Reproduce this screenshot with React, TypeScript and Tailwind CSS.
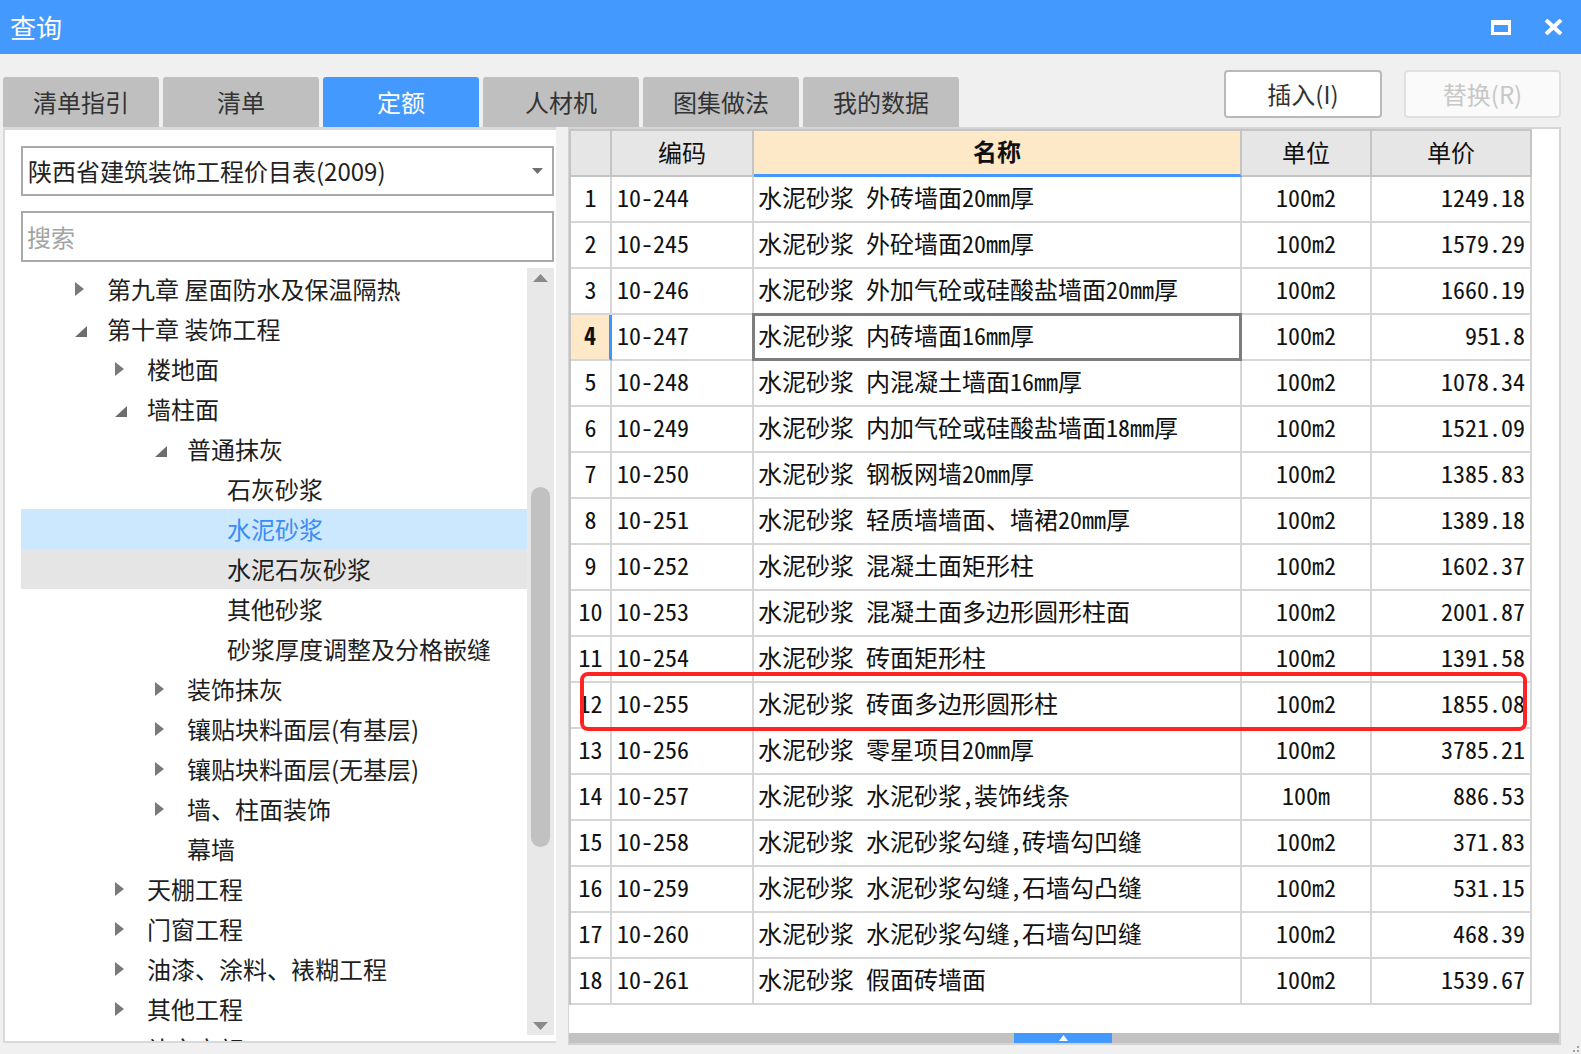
import React from 'react';

type TreeNode = {
  label: string;
  level: 1 | 2 | 3 | 4;
  state?: 'open' | 'closed';
  selected?: boolean;
  hover?: boolean;
};

const tabs = ['清单指引', '清单', '定额', '人材机', '图集做法', '我的数据'];

const tree: TreeNode[] = [
  { label: '第九章 屋面防水及保温隔热', level: 1, state: 'closed' },
  { label: '第十章 装饰工程', level: 1, state: 'open' },
  { label: '楼地面', level: 2, state: 'closed' },
  { label: '墙柱面', level: 2, state: 'open' },
  { label: '普通抹灰', level: 3, state: 'open' },
  { label: '石灰砂浆', level: 4 },
  { label: '水泥砂浆', level: 4, selected: true },
  { label: '水泥石灰砂浆', level: 4, hover: true },
  { label: '其他砂浆', level: 4 },
  { label: '砂浆厚度调整及分格嵌缝', level: 4 },
  { label: '装饰抹灰', level: 3, state: 'closed' },
  { label: '镶贴块料面层(有基层)', level: 3, state: 'closed' },
  { label: '镶贴块料面层(无基层)', level: 3, state: 'closed' },
  { label: '墙、柱面装饰', level: 3, state: 'closed' },
  { label: '幕墙', level: 3 },
  { label: '天棚工程', level: 2, state: 'closed' },
  { label: '门窗工程', level: 2, state: 'closed' },
  { label: '油漆、涂料、裱糊工程', level: 2, state: 'closed' },
  { label: '其他工程', level: 2, state: 'closed' },
  { label: '补充定额', level: 2, state: 'closed' },
];

const indent: Record<number, string> = {
  1: 'pl-[54px]',
  2: 'pl-[94px]',
  3: 'pl-[134px]',
  4: 'pl-[174px]',
};

const rows: [string, string, string, string][] = [
  ['10-244', '水泥砂浆 外砖墙面20mm厚', '100m2', '1249.18'],
  ['10-245', '水泥砂浆 外砼墙面20mm厚', '100m2', '1579.29'],
  ['10-246', '水泥砂浆 外加气砼或硅酸盐墙面20mm厚', '100m2', '1660.19'],
  ['10-247', '水泥砂浆 内砖墙面16mm厚', '100m2', '951.8'],
  ['10-248', '水泥砂浆 内混凝土墙面16mm厚', '100m2', '1078.34'],
  ['10-249', '水泥砂浆 内加气砼或硅酸盐墙面18mm厚', '100m2', '1521.09'],
  ['10-250', '水泥砂浆 钢板网墙20mm厚', '100m2', '1385.83'],
  ['10-251', '水泥砂浆 轻质墙墙面、墙裙20mm厚', '100m2', '1389.18'],
  ['10-252', '水泥砂浆 混凝土面矩形柱', '100m2', '1602.37'],
  ['10-253', '水泥砂浆 混凝土面多边形圆形柱面', '100m2', '2001.87'],
  ['10-254', '水泥砂浆 砖面矩形柱', '100m2', '1391.58'],
  ['10-255', '水泥砂浆 砖面多边形圆形柱', '100m2', '1855.08'],
  ['10-256', '水泥砂浆 零星项目20mm厚', '100m2', '3785.21'],
  ['10-257', '水泥砂浆 水泥砂浆,装饰线条', '100m', '886.53'],
  ['10-258', '水泥砂浆 水泥砂浆勾缝,砖墙勾凹缝', '100m2', '371.83'],
  ['10-259', '水泥砂浆 水泥砂浆勾缝,石墙勾凸缝', '100m2', '531.15'],
  ['10-260', '水泥砂浆 水泥砂浆勾缝,石墙勾凹缝', '100m2', '468.39'],
  ['10-261', '水泥砂浆 假面砖墙面', '100m2', '1539.67'],
];

const Closed = () => (
  <svg width="9" height="14" viewBox="0 0 9 14">
    <path d="M0 0 L9 7 L0 14 Z" fill="#7a7a7a" />
  </svg>
);

const Open = () => (
  <svg width="12" height="11" viewBox="0 0 12 11" className="mt-[4px]">
    <path d="M12 0 L12 11 L0 11 Z" fill="#6e6e6e" />
  </svg>
);

const cell = 'h-[46px] pb-[5px] border-r-2 border-b-2 border-[#d6d6d6] flex items-center';
const head = 'h-[46px] pb-[3px] border-r-2 border-b-2 border-[#c4c4c4] bg-[#e6e6e6] flex items-center justify-center';

export default function App() {
  return (
    <div className="relative w-[1581px] h-[1054px] overflow-hidden bg-[#f0f0f0] flex flex-col font-['Noto_Sans_CJK_SC','Noto_Sans',sans-serif] text-[#1e1e1e]">
      {/* title bar */}
      <div className="h-[54px] bg-[#4499ff] flex items-center pl-[10px] pr-[18px]">
        <span className="text-[26px] leading-none text-white">查询</span>
        <div className="ml-auto w-[20px] h-[15px] border-[3px] border-t-[5px] border-white" />
        <svg width="19" height="16" viewBox="0 0 19 16" className="ml-[33px]">
          <path d="M2 1 L17 15 M17 1 L2 15" stroke="#fff" strokeWidth="4" />
        </svg>
      </div>

      {/* tabs + buttons */}
      <div className="h-[73px] flex">
        <div className="flex gap-[4px] pl-[3px] pt-[23px]">
          {tabs.map((t) => (
            <div
              key={t}
              className={`w-[156px] h-[50px] rounded-t-[3px] flex items-center justify-center text-[24px] ${
                t === '定额' ? 'bg-[#4499ff] text-white' : 'bg-[#bfbfbf] text-[#333]'
              }`}
            >
              {t}
            </div>
          ))}
        </div>
        <div className="ml-auto mr-[20px] mt-[16px] flex gap-[22px]">
          <div className="w-[158px] h-[48px] rounded-[4px] border-2 border-[#b9b9b9] bg-white flex items-center justify-center text-[24px] text-[#333]">
            插入(I)
          </div>
          <div className="w-[157px] h-[48px] rounded-[4px] border-2 border-[#e0e0e0] bg-[#fafafa] flex items-center justify-center text-[24px] text-[#c8c8c8]">
            替换(R)
          </div>
        </div>
      </div>

      {/* panels */}
      <div className="flex">
        {/* left panel */}
        <div className="ml-[3px] w-[553px] h-[916px] bg-white border-l-2 border-t-[3px] border-b-2 border-[#d9d9d9] pl-[16px] pr-[2px] pt-[16px] flex flex-col">
          <div className="h-[50px] border-2 border-[#a9a9a9] flex items-center pl-[5px] pr-[9px] text-[24px] text-[#222]">
            <span>陕西省建筑装饰工程价目表(2009)</span>
            <svg width="11" height="6" viewBox="0 0 11 6" className="ml-auto">
              <path d="M0 0 L11 0 L5.5 6 Z" fill="#707070" />
            </svg>
          </div>
          <div className="mt-[15px] h-[51px] border-2 border-[#a9a9a9] flex items-center pl-[4px] text-[24px] text-[#a3a3a3]">
            搜索
          </div>
          <div className="mt-[6px] flex-1 flex overflow-hidden">
            <div className="w-[506px] pt-[1px] overflow-hidden">
              {tree.map((n) => (
                <div
                  key={n.label}
                  className={`h-[40px] flex items-center ${indent[n.level]} ${
                    n.selected ? 'bg-[#cce8ff] text-[#3b8cf5]' : n.hover ? 'bg-[#e5e5e5]' : ''
                  }`}
                >
                  <div className="w-[32px] shrink-0 flex items-center">
                    {n.state === 'closed' && <Closed />}
                    {n.state === 'open' && <Open />}
                  </div>
                  <span className="text-[24px] whitespace-nowrap">{n.label}</span>
                </div>
              ))}
            </div>
            <div className="w-[27px] mb-[6px] bg-[#e8e8e8] flex flex-col items-center">
              <svg width="15" height="8" viewBox="0 0 15 8" className="mt-[6px]">
                <path d="M0 8 L7.5 0 L15 8 Z" fill="#8a8a8a" />
              </svg>
              <div className="mt-[205px] w-[19px] h-[360px] rounded-full bg-[#c1c1c1]" />
              <svg width="15" height="8" viewBox="0 0 15 8" className="mt-auto mb-[5px]">
                <path d="M0 0 L15 0 L7.5 8 Z" fill="#8a8a8a" />
              </svg>
            </div>
          </div>
        </div>

        {/* right panel */}
        <div className="relative ml-[12px] w-[993px] h-[918px] bg-white border-t-2 border-b-2 border-l border-r-2 border-[#d4d4d4] flex flex-col">
          <div className="w-[963px] grid grid-cols-[41px_142px_488px_130px_160px] border-l-2 border-t-2 border-[#c4c4c4] font-['Noto_Sans_Mono_CJK_SC','Noto_Sans_CJK_SC',monospace] text-[24px] text-[#111]">
            <div className={head} />
            <div className={head}>编码</div>
            <div className="h-[46px] pb-[3px] border-r-2 border-b-[3px] border-r-[#c4c4c4] border-b-[#4499ff] bg-[#fde8c8] flex items-center justify-center font-bold">
              名称
            </div>
            <div className={head}>单位</div>
            <div className={head}>单价</div>

            {rows.map(([code, name, unit, price], i) => {
              const active = i === 3;
              return (
                <React.Fragment key={code}>
                  <div
                    className={`${cell} justify-center ${
                      active ? 'bg-[#fde8c8] font-bold border-r-[3px] border-r-[#3f93ff]' : ''
                    }`}
                  >
                    {i + 1}
                  </div>
                  <div className={`${cell} pl-[5px]`}>{code}</div>
                  <div className={`${cell} pl-[4px] relative whitespace-pre`}>
                    {name}
                    {active && (
                      <div className="absolute left-[-2px] top-[-2px] right-[-2px] bottom-[-2px] border-[3px] border-[#7d7d7d]" />
                    )}
                  </div>
                  <div className={`${cell} justify-center`}>{unit}</div>
                  <div className={`${cell} justify-end pr-[5px]`}>{price}</div>
                </React.Fragment>
              );
            })}
          </div>

          <div className="mt-auto h-[10px] bg-[#c2c2c2] flex">
            <div className="ml-[445px] w-[98px] h-[10px] bg-[#4499ff] flex items-center justify-center">
              <svg width="9" height="6" viewBox="0 0 9 6">
                <path d="M0 6 L4.5 0 L9 6 Z" fill="#fff" />
              </svg>
            </div>
          </div>

          {/* red highlight */}
          <div className="absolute left-[11px] top-[543px] w-[947px] h-[59px] border-4 border-[#ff2424] rounded-[8px]" />
        </div>
      </div>

      {/* resize grip */}
      <div className="absolute right-[2px] bottom-[2px] grid grid-cols-3 gap-[2px]">
        <span />
        <span />
        <span className="w-[2px] h-[2px] bg-[#a0a0a0]" />
        <span />
        <span className="w-[2px] h-[2px] bg-[#a0a0a0]" />
        <span className="w-[2px] h-[2px] bg-[#a0a0a0]" />
      </div>
    </div>
  );
}
